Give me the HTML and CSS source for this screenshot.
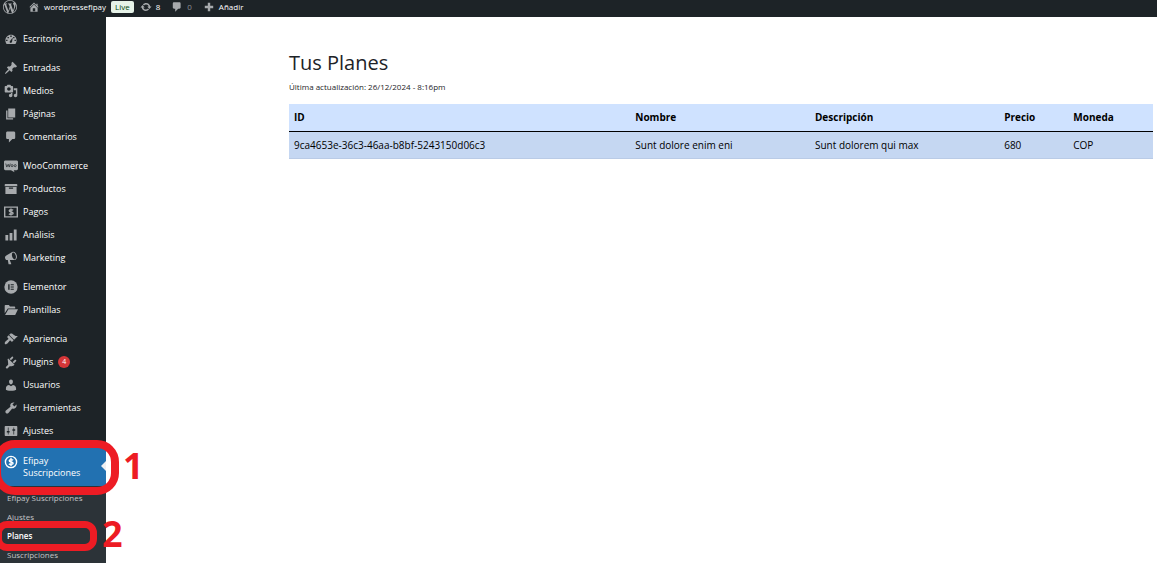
FILE: index.html
```html
<!DOCTYPE html>
<html lang="es">
<head>
  <meta charset="UTF-8">
  <title>Tus Planes</title>
  <link rel="stylesheet" href="styles.css">
</head>
<body>

<header class="adminbar">
  <a href="#" class="bar-logo" aria-label="WordPress">
    <svg class="icon-logo" viewBox="0 0 20 20"><path fill-rule="evenodd" d="M20 10c0-5.51-4.49-10-10-10S0 4.49 0 10s4.490 10 10 10 10-4.490 10-10zM7.780 15.370L4.370 6.220c.550-.020 1.170-.080 1.170-.080.500-.060.440-1.130-.060-1.110 0 0-1.450.110-2.370.110-.180 0-.370 0-.580-.010C4.120 2.690 6.870 1.110 10 1.110c2.330 0 4.450.870 6.050 2.340-.680-.110-1.650.390-1.650 1.580 0 .740.450 1.360.900 2.100.350.610.550 1.360.550 2.460 0 1.490-1.400 5-1.400 5l-3.030-8.370c.540-.020.820-.170.820-.170.500-.050.440-1.250-.060-1.220 0 0-1.440.120-2.380.120-.870 0-2.330-.120-2.330-.120-.500-.030-.560 1.200-.060 1.220l.920.080 1.260 3.410zM17.410 10c.240-.640.740-1.870.430-4.250.700 1.290 1.050 2.710 1.050 4.250 0 3.290-1.730 6.240-4.400 7.780.970-2.590 1.940-5.200 2.920-7.780zM6.100 18.090C3.120 16.650 1.110 13.530 1.110 10c0-1.300.230-2.480.720-3.590C3.250 10.300 4.670 14.200 6.100 18.090zm4.030-6.630l2.580 6.980c-.860.290-1.760.450-2.710.450-.790 0-1.570-.110-2.290-.330.810-2.380 1.620-4.740 2.420-7.100z"/></svg>
  </a>
  <a href="#" class="bar-site">
    <svg class="icon" viewBox="0 0 20 20"><path d="M16 8.500l1.530 1.530-1.060 1.060L10 4.600l-6.470 6.500-1.060-1.060L10 2.500l4 4v-2h2v4zm-6-2.460l6 5.990V18H4v-5.970zM12 17v-5H8v5h4z"/></svg>
    <span>wordpressefipay</span>
  </a>
  <span class="live">Live</span>
  <a href="#" class="bar-updates">
    <svg class="icon" viewBox="0 0 20 20"><path d="M10.200 3.280c3.530 0 6.430 2.610 6.920 6h2.080l-3.500 4-3.500-4h2.320c-.450-1.970-2.210-3.450-4.320-3.450-1.450 0-2.730.710-3.540 1.780L4.950 5.660C6.230 4.200 8.110 3.280 10.200 3.280zm-.400 13.440c-3.520 0-6.430-2.610-6.920-6H.800l3.500-4 3.500 4H5.480c.450 1.970 2.210 3.450 4.320 3.450 1.450 0 2.730-.710 3.540-1.780l1.710 1.950c-1.280 1.460-3.150 2.380-5.250 2.380z"/></svg>
    <span>8</span>
  </a>
  <a href="#" class="bar-comments">
    <svg class="icon" viewBox="0 0 20 20"><path d="M5 2h9c1.100 0 2 .900 2 2v7c0 1.100-.900 2-2 2h-2l-5 5v-5H5c-1.100 0-2-.900-2-2V4c0-1.100.900-2 2-2z"/></svg>
    <span>0</span>
  </a>
  <a href="#" class="bar-new">
    <svg class="icon" viewBox="0 0 20 20"><path d="M17 8v4h-5v5H8v-5H3V8h5V3h4v5h5z"/></svg>
    <span>Añadir</span>
  </a>
</header>

<div class="layout">
  <nav class="sidebar">
    <ul class="menu">
      <li><a href="#"><svg class="icon" viewBox="0 0 20 20"><path fill-rule="evenodd" d="M3.760 17h12.480c1.100-1.350 1.760-3.080 1.760-4.950C18 7.600 14.420 4 10 4s-8 3.600-8 8.050c0 1.870.660 3.600 1.760 4.950zM9 5h2v2H9zM5 7h2v2H5zm8 0h2v2h-2zM3 11h2v2H3zm12 0h2v2h-2zm-5.700 4.500c-1.100-.300-1.500-1.500-.900-2.400L12.500 8l-1 5.900c-.200 1.100-1.200 1.900-2.200 1.600z"/></svg>Escritorio</a></li>
      <li class="group"><a href="#"><svg class="icon" viewBox="0 0 20 20"><path d="M10.440 3.020l1.820-1.820 6.360 6.350-1.830 1.820c-1.050-.680-2.480-.570-3.410.360l-.750.750c-.920.930-1.040 2.350-.350 3.410l-1.830 1.820-2.410-2.410-2.800 2.790c-.420.420-3.380 2.710-3.800 2.290s1.860-3.390 2.280-3.810l2.790-2.790L4.100 9.360l1.830-1.820c1.050.690 2.480.570 3.400-.360l.750-.750c.930-.920 1.050-2.350.360-3.410z"/></svg>Entradas</a></li>
      <li><a href="#"><svg class="icon" viewBox="0 0 20 20"><path fill-rule="evenodd" d="M13 11V4c0-.550-.450-1-1-1h-1.670L9 1H5L3.670 3H2c-.550 0-1 .450-1 1v7c0 .550.450 1 1 1h10c.550 0 1-.450 1-1zM7 4.500c1.380 0 2.500 1.120 2.500 2.500S8.380 9.500 7 9.500 4.500 8.380 4.500 7 5.620 4.500 7 4.500zM14 6h5v10.500c0 1.380-1.120 2.500-2.500 2.500S14 17.880 14 16.500s1.120-2.500 2.500-2.500c.170 0 .340.020.500.050V9h-3V6zm-4 8.050V13h2v3.500c0 1.380-1.120 2.500-2.500 2.500S7 17.880 7 16.500 8.120 14 9.500 14c.170 0 .340.020.500.050z"/></svg>Medios</a></li>
      <li><a href="#"><svg class="icon" viewBox="0 0 20 20"><path d="M6 15V2h10v13H6zm-1 1h8v2H3V5h2v11z"/></svg>Páginas</a></li>
      <li><a href="#"><svg class="icon" viewBox="0 0 20 20"><path d="M5 2h9c1.100 0 2 .900 2 2v7c0 1.100-.900 2-2 2h-2l-5 5v-5H5c-1.100 0-2-.900-2-2V4c0-1.100.900-2 2-2z"/></svg>Comentarios</a></li>
      <li class="group"><a href="#"><svg class="icon" viewBox="0 0 20 20"><path d="M2 2h16c1.100 0 2 .900 2 2v10c0 1.100-.900 2-2 2h-4l1 3-5-3H2c-1.100 0-2-.900-2-2V4c0-1.100.900-2 2-2z"/><path class="cut-line" d="M2.500 6.500l1.500 5 2-4 1.500 4 1.500-5"/><circle class="cut-line" cx="11.500" cy="9.500" r="1.500"/><circle class="cut-line" cx="16" cy="9.500" r="1.500"/></svg>WooCommerce</a></li>
      <li><a href="#"><svg class="icon" viewBox="0 0 20 20"><path fill-rule="evenodd" d="M19 4v2H1V4c0-.550.450-1 1-1h16c.550 0 1 .450 1 1zM2 7h16v10H2V7zm5 1v1.500h6V8H7z"/></svg>Productos</a></li>
      <li><a href="#"><svg class="icon" viewBox="0 0 20 20"><path fill-rule="evenodd" d="M0 2h20v16H0V2zm2 2v12h16V4H2z"/><path class="line" d="M13 7.500c-1-1-5.500-1.200-5.500.700 0 2.200 5.500 1.300 5.500 3.600 0 2-4.500 1.900-6 .600M10 5v10"/></svg>Pagos</a></li>
      <li><a href="#"><svg class="icon" viewBox="0 0 20 20"><path d="M18 18V2h-4v16h4zm-6 0V7H8v11h4zm-6 0v-8H2v8h4z"/></svg>Análisis</a></li>
      <li><a href="#"><svg class="icon" viewBox="0 0 20 20"><path fill-rule="evenodd" d="M18.150 5.940c.460 1.620.380 3.220-.020 4.480-.420 1.280-1.260 2.180-2.300 2.480-.160.060-.260.060-.400.060-.060.020-.120.020-.180.020-.060.020-.140.020-.220.020h-6.800l2.220 5.500c.020.140-.060.260-.140.340-.080.100-.240.160-.340.160H6.950c-.100 0-.260-.060-.340-.160-.080-.080-.160-.200-.140-.340l-1-5.500H4.250l-.020-.020c-.500.060-1.080-.180-1.540-.620s-.880-1.080-1.060-1.880c-.240-.800-.200-1.560-.020-2.200.180-.620.580-1.080 1.060-1.300l.020-.020 9-5.400c.100-.060.180-.100.240-.160.060-.040.140-.080.240-.120.160-.080.280-.120.500-.180 1.040-.300 2.240.100 3.220.980s1.840 2.240 2.260 3.860zm-2.580 5.980c1.200-.340 1.960-2.700 1.120-5.560-.780-2.780-2.680-4.400-3.900-4.060-1.220.360-1.960 2.740-1.140 5.560.800 2.800 2.680 4.400 3.920 4.060z"/></svg>Marketing</a></li>
      <li class="group"><a href="#"><svg class="icon" viewBox="0 0 20 20"><circle cx="10" cy="10" r="9.500"/><path class="cut" d="M6 6h2v8H6zM9.500 6H14v1.600H9.500zM9.500 9.200H14v1.600H9.500zM9.500 12.400H14V14H9.500z"/></svg>Elementor</a></li>
      <li><a href="#"><svg class="icon" viewBox="0 0 20 20"><path d="M1 4c0-.550.450-1 1-1h5l1.500 2H15c.550 0 1 .450 1 1v2H5.500L1 14.500zM6.300 9H20l-4 8H1.500z"/></svg>Plantillas</a></li>
      <li class="group"><a href="#"><svg class="icon" viewBox="0 0 20 20"><path d="M14.480 11.060L7.410 3.990l1.500-1.500c.500-.560 2.300-.470 3.510.320 1.210.800 1.430 1.280 2.910 2.100 1.180.640 2.450 1.260 4.450.850zm-.710.710L6.700 4.700 4.930 6.470c-.390.390-.390 1.020 0 1.410l1.060 1.060c.390.390.390 1.030 0 1.420-.600.600-1.430 1.110-2.210 1.690-.350.260-.700.530-1.010.840C1.430 14.230.400 16.080 1.400 17.070c.990 1 2.840-.030 4.180-1.360.310-.310.580-.660.850-1.020.570-.780 1.080-1.610 1.690-2.210.390-.390 1.020-.390 1.410 0l1.060 1.060c.390.390 1.020.390 1.410 0z"/></svg>Apariencia</a></li>
      <li><a href="#"><svg class="icon" viewBox="0 0 20 20"><path d="M13.110 4.360L9.870 7.600 8 5.730l3.240-3.240c.350-.340 1.050-.200 1.560.320.520.510.660 1.210.310 1.550zm-8 1.770l.910-1.120 9.010 9.010-1.190.840c-.710.710-2.630 1.160-3.820 1.160H8.140L4.900 19.260c-.370.370-1.150.170-1.780-.450-.620-.630-.820-1.410-.450-1.780l3.240-3.240v-1.880c0-1.180-.510-4.990-.800-5.780zm7.260 3.970l3.240-3.240c.340-.350 1.040-.210 1.550.310.520.510.660 1.210.310 1.550l-3.240 3.250z"/></svg>Plugins <span class="count">4</span></a></li>
      <li><a href="#"><svg class="icon" viewBox="0 0 20 20"><path d="M10 9.250c-2.270 0-2.730-3.440-2.730-3.440C7 4.020 7.820 2 9.970 2c2.160 0 2.980 2.020 2.710 3.810 0 0-.410 3.440-2.680 3.440zm0 2.570L12.720 10c2.390 0 4.520 2.330 4.520 4.530v2.490s-3.650 1.130-7.240 1.130c-3.650 0-7.240-1.130-7.240-1.130v-2.490c0-2.250 1.940-4.480 4.470-4.480z"/></svg>Usuarios</a></li>
      <li><a href="#"><svg class="icon" viewBox="0 0 20 20"><path d="M16.680 9.770c-1.340 1.340-3.300 1.670-4.950.990l-5.410 6.520c-.990.990-2.590.990-3.580 0s-.990-2.590 0-3.570l6.520-5.420c-.680-1.650-.350-3.610.990-4.950 1.280-1.280 3.120-1.620 4.720-1.060l-2.890 2.890 2.820 2.820 2.860-2.870c.530 1.580.180 3.390-1.080 4.650z"/></svg>Herramientas</a></li>
      <li><a href="#"><svg class="icon" viewBox="0 0 20 20"><path fill-rule="evenodd" d="M2 3h16c.550 0 1 .450 1 1v12c0 .550-.450 1-1 1H2c-.550 0-1-.450-1-1V4c0-.550.450-1 1-1zm3.500 2v5H4v2h1.500v3h1v-3H8v-2H6.500V5zm8 0v2.500H12v2h1.500V15h1V9.500H16v-2h-1.500V5z"/></svg>Ajustes</a></li>
      <li class="group current">
        <a href="#"><svg class="icon" viewBox="0 0 20 20"><circle class="line" cx="10" cy="10" r="8"/><path class="line" d="M13 7.500c-1-1.300-5.500-1.300-5.500.700 0 2.200 5.500 1.300 5.500 3.600 0 2-4.500 2.100-6 .600M10 4v12"/></svg>Efipay Suscripciones</a>
      </li>
    </ul>
    <ul class="submenu">
      <li><a href="#">Efipay Suscripciones</a></li>
      <li><a href="#">Ajustes</a></li>
      <li><a href="#" class="selected">Planes</a></li>
      <li><a href="#">Suscripciones</a></li>
    </ul>

    <!-- step marks -->
    <div class="mark mark-one"></div>
    <span class="step step-one">1</span>
    <div class="mark mark-two"></div>
    <span class="step step-two">2</span>
  </nav>

  <main class="content">
    <h1>Tus Planes</h1>
    <p class="updated">Última actualización: 26/12/2024 - 8:16pm</p>
    <table class="plans">
      <thead>
        <tr>
          <th class="col-id">ID</th>
          <th class="col-name">Nombre</th>
          <th class="col-desc">Descripción</th>
          <th class="col-price">Precio</th>
          <th>Moneda</th>
        </tr>
      </thead>
      <tbody>
        <tr>
          <td>9ca4653e-36c3-46aa-b8bf-5243150d06c3</td>
          <td>Sunt dolore enim eni</td>
          <td>Sunt dolorem qui max</td>
          <td>680</td>
          <td>COP</td>
        </tr>
      </tbody>
    </table>
  </main>
</div>

</body>
</html>
```
FILE: styles.css
```css
* {
  box-sizing: border-box;
}
body {
  font-family: "Segoe UI", "Open Sans", "Noto Sans", sans-serif;
  font-size: 9px;
  margin: 0;
  height: 100vh;
  overflow: hidden;
  display: flex;
  flex-direction: column;
  background-color: #fff;
  color: #1d2327;
}
a {
  color: #fff;
  text-decoration: none;
}
ul {
  list-style: none;
  margin: 0;
  padding: 0;
}
.icon {
  width: 14px;
  height: 14px;
  flex: none;
  fill: #a7aaad;
}
.line {
  fill: none;
  stroke: #a7aaad;
  stroke-width: 2;
}
.cut {
  fill: #1d2327;
}
.cut-line {
  fill: none;
  stroke: #1d2327;
}

/* top bar */
.adminbar {
  display: flex;
  align-items: center;
  flex: none;
  height: 17px;
  padding: 0 3px 4px;
  background-color: #1d2327;
  font-size: 8px;
}
.adminbar a {
  display: flex;
  align-items: center;
  gap: 4px;
}
.adminbar .icon {
  width: 12px;
  height: 12px;
}
.icon-logo {
  width: 14px;
  height: 14px;
  fill: #a7aaad;
}
.bar-site {
  margin-left: 11px;
}
.live {
  margin: 0 6px 0 5px;
  padding: 0 4px;
  border-radius: 2px;
  background-color: #e6f2e8;
  color: #00450c;
  line-height: 12px;
}
.bar-comments {
  margin: 0 11px;
}
.adminbar .bar-comments {
  color: #8c8f94;
}

/* left menu */
.layout {
  display: flex;
  flex: 1;
  min-height: 0;
}
.sidebar {
  position: relative;
  display: flex;
  flex-direction: column;
  flex: none;
  width: 106px;
  padding-top: 10px;
  background-color: #1d2327;
}
.menu a {
  display: flex;
  align-items: center;
  min-height: 23px;
  padding-left: 4px;
  gap: 5px;
}
.group {
  margin-top: 6px;
}
.count {
  width: 12px;
  border-radius: 50%;
  background-color: #d63638;
  color: #fff;
  font-size: 7px;
  line-height: 12px;
  text-align: center;
}
.current {
  position: relative;
  background-color: #2271b1;
}
.menu .current a {
  align-items: flex-start;
  height: 38px;
  padding-top: 7px;
  line-height: 12px;
}
.current .line {
  stroke: #fff;
}
.current::after {
  content: "";
  position: absolute;
  right: 0;
  top: 13px;
  border: 5px solid transparent;
  border-right-color: #f0f0f1;
  border-left: 0;
}
.submenu {
  flex: 1;
  padding-top: 2px;
  background-color: #2c3338;
  font-size: 8px;
}
.submenu a {
  display: block;
  padding-left: 7px;
  color: #c3c4c7;
  line-height: 19px;
}
.submenu .selected {
  color: #fff;
  font-weight: 600;
}

/* step marks drawn over the menu */
.mark {
  position: absolute;
  border: 8px solid #ed1c24;
}
.mark-one {
  left: -7px;
  top: 423px;
  width: 126px;
  height: 55px;
  border-radius: 22px;
}
.mark-two {
  left: -5px;
  top: 504px;
  width: 102px;
  height: 30px;
  border-width: 7px;
  border-radius: 12px;
}
.step {
  position: absolute;
  color: #ed1c24;
  font-size: 36px;
  font-weight: 700;
  line-height: 36px;
}
.step-one {
  left: 123px;
  top: 431px;
}
.step-two {
  left: 102px;
  top: 499px;
}

/* page */
.content {
  flex: 1;
  padding: 32px 4px 0 183px;
}
h1 {
  margin: 0;
  font-size: 20px;
  font-weight: 500;
  line-height: 28px;
}
.updated {
  margin: 4px 0 11px;
  font-size: 8px;
  line-height: 12px;
}
.plans {
  width: 100%;
  table-layout: fixed;
  border-collapse: collapse;
  color: #000;
  font-size: 10px;
  line-height: 16px;
}
.plans th {
  padding: 5px 5px 6px;
  background-color: #cfe2ff;
  border-bottom: 1px solid #000;
  font-weight: 700;
  text-align: left;
}
.plans td {
  padding: 5px;
  background-color: #c5d7f2;
  border-bottom: 1px solid #bacbe6;
}
.col-id {
  width: 39.5%;
}
.col-name {
  width: 20.8%;
}
.col-desc {
  width: 21.9%;
}
.col-price {
  width: 8%;
}
```
